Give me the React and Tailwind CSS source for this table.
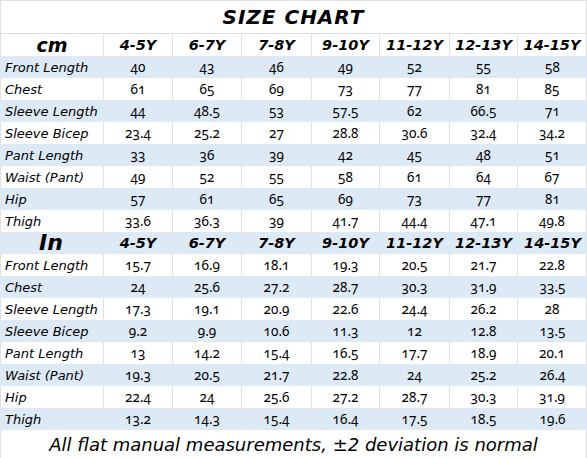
import React from 'react';

const sizes = ['4-5Y', '6-7Y', '7-8Y', '9-10Y', '11-12Y', '12-13Y', '14-15Y'];

const cmRows = [
  ['Front Length', '40', '43', '46', '49', '52', '55', '58'],
  ['Chest', '61', '65', '69', '73', '77', '81', '85'],
  ['Sleeve Length', '44', '48.5', '53', '57.5', '62', '66.5', '71'],
  ['Sleeve Bicep', '23.4', '25.2', '27', '28.8', '30.6', '32.4', '34.2'],
  ['Pant Length', '33', '36', '39', '42', '45', '48', '51'],
  ['Waist (Pant)', '49', '52', '55', '58', '61', '64', '67'],
  ['Hip', '57', '61', '65', '69', '73', '77', '81'],
  ['Thigh', '33.6', '36.3', '39', '41.7', '44.4', '47.1', '49.8'],
];

const inRows = [
  ['Front Length', '15.7', '16.9', '18.1', '19.3', '20.5', '21.7', '22.8'],
  ['Chest', '24', '25.6', '27.2', '28.7', '30.3', '31.9', '33.5'],
  ['Sleeve Length', '17.3', '19.1', '20.9', '22.6', '24.4', '26.2', '28'],
  ['Sleeve Bicep', '9.2', '9.9', '10.6', '11.3', '12', '12.8', '13.5'],
  ['Pant Length', '13', '14.2', '15.4', '16.5', '17.7', '18.9', '20.1'],
  ['Waist (Pant)', '19.3', '20.5', '21.7', '22.8', '24', '25.2', '26.4'],
  ['Hip', '22.4', '24', '25.6', '27.2', '28.7', '30.3', '31.9'],
  ['Thigh', '13.2', '14.3', '15.4', '16.4', '17.5', '18.5', '19.6'],
];

const comic = "font-['DejaVu_Sans',sans-serif]";
const cols = 'grid grid-cols-[103px_69px_69px_70px_68px_70px_68px_70px]';

const Row = ({ cells, blue, header, unit }) => (
  <div className={`${cols} h-[22px] ${blue ? 'bg-[#dde9f5]' : 'bg-white'}`}>
    {cells.map((c, i) => {
      const border = blue
        ? 'border-l border-transparent'
        : `border-l border-[#e1e1e1] ${i === cells.length - 1 ? 'border-r' : ''}`;
      if (i === 0) {
        if (header) {
          return (
            <div
              key={i}
              className={`${border} ${comic} flex items-center ${unit === 'In' ? 'pl-[38px] text-[22px]' : 'justify-center text-[19px]'} font-bold italic leading-none text-black`}
            >
              {c}
            </div>
          );
        }
        return (
          <div key={i} className={`${border} ${comic} flex items-center pl-[4px] pt-[1px] text-[13px] italic leading-none text-black whitespace-nowrap`}>
            {c}
          </div>
        );
      }
      return (
        <div
          key={i}
          className={`${border} flex items-center justify-center leading-none text-black ${
            header
              ? `${comic} text-[14.5px] font-bold italic`
              : "font-['Noto_Sans',sans-serif] text-[13.5px] oldstyle-nums pt-[2px]"
          }`}
        >
          {c}
        </div>
      );
    })}
  </div>
);

export default function App() {
  return (
    <div className="w-[587px] h-[458px] bg-white overflow-hidden">
      <div className={`h-[34px] border border-[#e1e1e1] flex items-center justify-center ${comic} text-[20px] font-bold italic tracking-[1px] text-black`}>
        SIZE CHART
      </div>
      <Row cells={['cm', ...sizes]} header unit="cm" />
      {cmRows.map((r, i) => (
        <Row key={`cm${i}`} cells={r} blue={i % 2 === 0} />
      ))}
      <Row cells={['In', ...sizes]} header blue unit="In" />
      {inRows.map((r, i) => (
        <Row key={`in${i}`} cells={r} blue={i % 2 === 1} />
      ))}
      <div className={`h-[29px] border-x border-b border-[#e1e1e1] flex items-center justify-center ${comic} text-[18px] italic text-black`}>
        All flat manual measurements, ±2 deviation is normal
      </div>
    </div>
  );
}
